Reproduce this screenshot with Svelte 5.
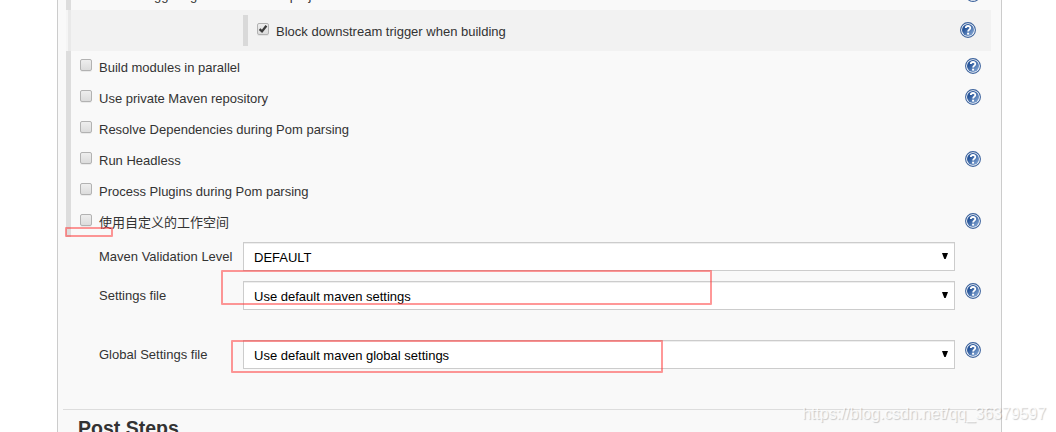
<script lang="ts">
	type Option = {
		label: string;
		checked?: boolean;
		help?: boolean;
		nested?: boolean;
	}

	type Field = {
		label: string;
		value: string;
		help?: boolean;
	}

	const options: Option[] = [
		{ label: 'Enable triggering of downstream projects', checked: true, help: true },
		{ label: 'Block downstream trigger when building', checked: true, help: true, nested: true },
		{ label: 'Build modules in parallel', help: true },
		{ label: 'Use private Maven repository', help: true },
		{ label: 'Resolve Dependencies during Pom parsing' },
		{ label: 'Run Headless', help: true },
		{ label: 'Process Plugins during Pom parsing' },
		{ label: '使用自定义的工作空间', help: true },
	];

	const fields: Field[] = [
		{ label: 'Maven Validation Level', value: 'DEFAULT' },
		{ label: 'Settings file', value: 'Use default maven settings', help: true },
		{ label: 'Global Settings file', value: 'Use default maven global settings', help: true },
	];
</script>

{#snippet helpIcon()}
	<svg class="help" viewBox="0 0 16 16">
		<defs>
			<linearGradient id="help-fill" x1="0" y1="0" x2="1" y2="1">
				<stop offset="0.3" stop-color="#28569a" />
				<stop offset="1" stop-color="#92b2dc" />
			</linearGradient>
		</defs>
		<circle cx="8" cy="8" r="7.4" fill="#fff" stroke="#3d639d" stroke-width="1.1" />
		<circle cx="8" cy="8" r="6" fill="url(#help-fill)" />
		<path d="M5.8 6.1C5.8 3.3 10.3 3.4 10.3 5.9C10.3 7.6 8.1 7.6 8.1 9.5" fill="none" stroke="#fff" stroke-width="1.8" />
		<rect x="7.1" y="10.7" width="2" height="1.9" fill="#fff" />
	</svg>
{/snippet}

<div class="page">
	<main>
		<section class="options">
			{#each options as option}
				<div class="option" class:nested={option.nested}>
					<label>
						<span class="box">
							{#if option.checked}
								<svg viewBox="0 0 10 10">
									<path d="M1.6 5.2L4 7.4L8.4 1.8" />
								</svg>
							{/if}
						</span>
						<span class="text">{option.label}</span>
					</label>
					{#if option.help}
						{@render helpIcon()}
					{/if}
				</div>
			{/each}
		</section>

		<section class="fields">
			{#each fields as field}
				<div class="field">
					<span class="name">{field.label}</span>
					<div class="select">
						<span>{field.value}</span>
						<svg viewBox="0 0 6 6"><path d="M0 0H6L3.7 6H2.3Z" /></svg>
					</div>
					{#if field.help}
						{@render helpIcon()}
					{/if}
				</div>
			{/each}
		</section>

		<h2>Post Steps</h2>
	</main>

	<div class="mark workspace"></div>
	<div class="mark settings"></div>
	<div class="mark global-settings"></div>
	<span class="watermark">https://blog.csdn.net/qq_36379597</span>
</div>

<style>
	.page {
		position: relative;

		height: 432px;

		overflow: hidden;

		background-color: #fff;
		color: #333;

		font: 13px/20px 'Liberation Sans', Arial, 'Noto Sans CJK SC', sans-serif;
	}

	main {
		box-sizing: border-box;
		width: 945px;
		height: 432px;
		margin-left: 57px;
		border: solid #ccc;
		border-width: 0 1px;
		padding: 0 5px;

		overflow: hidden;

		background-color: #f9f9f9;
	}

	.options {
		margin: -21px 5px 0 3px;
		border-left: 5px solid #ddd;
	}

	.option {
		box-sizing: border-box;
		height: 31px;
		padding: 7px 10px 0 9px;

		display: flex;
		align-items: flex-start;
		justify-content: space-between;

		label {
			display: flex;
			gap: 7px;
		}

		&.nested {
			height: 41px;
			margin-left: -5px;
			border-left: 2px solid #f5f5f5;
			padding: 5px 15px 5px 175px;

			background: linear-gradient(to right, #e9e9e9 3px, #f2f2f2 3px);
			background-clip: padding-box;

			label {
				height: 31px;
				border-left: 5px solid #d9d9d9;
				padding-left: 9px;
			}

			.box {
				margin-top: 8px;
			}

			.text {
				padding-top: 7px;
			}

			.help {
				margin-top: 7px;
			}
		}
	}

	.box {
		box-sizing: border-box;
		width: 12px;
		height: 12px;
		margin-top: 1px;
		border: 1px solid #b2b2b2;
		border-radius: 2px;

		line-height: 0;

		background: linear-gradient(#eee, #dcdcdc);
		box-shadow: 0 1px 0 rgba(0, 0, 0, 0.06);

		svg {
			width: 10px;
			height: 10px;
		}

		path {
			fill: none;
			stroke: #3c3c3c;
			stroke-width: 2.3;
		}
	}

	.help {
		flex: none;
		width: 16px;
		height: 16px;
	}

	.fields {
		height: 167px;
		padding: 5px 0 0 36px;
	}

	.field {
		height: 29px;
		margin-bottom: 10px;

		display: flex;
		align-items: flex-start;

		&:nth-child(2) {
			margin-bottom: 30px;
		}

		.name {
			width: 144px;
			padding-top: 5px;
		}

		.help {
			margin: 2px 0 0 10px;
		}
	}

	.select {
		box-sizing: border-box;
		width: 712px;
		height: 29px;
		border: 1px solid #ccc;
		padding: 3px 6px 0 10px;

		display: flex;
		align-items: center;
		justify-content: space-between;

		background-color: #fff;
		box-shadow: inset 0 1px 0 #eee;
		color: #000;

		svg {
			width: 6px;
			height: 6px;
			margin-bottom: 5px;
		}
	}

	h2 {
		margin: 0;
		border-top: 1px solid #ddd;
		padding: 6px 0 0 15px;

		font-size: 19.5px;
		line-height: 24px;
	}

	/* Hand-drawn highlights over the form */
	.mark {
		position: absolute;

		box-sizing: border-box;
		border: 2px solid rgba(255, 50, 50, 0.5);
		border-radius: 1px;
	}

	.workspace {
		left: 65px;
		top: 227px;
		width: 48px;
		height: 10px;
	}

	.settings {
		left: 221px;
		top: 270px;
		width: 491px;
		height: 35px;
	}

	.global-settings {
		left: 231px;
		top: 340px;
		width: 432px;
		height: 33px;
	}

	.watermark {
		position: absolute;
		right: 10px;
		bottom: 8px;

		color: rgba(255, 255, 255, 0.8);

		font-size: 15.9px;
		text-shadow: 1px 1px 1px rgba(0, 0, 0, 0.2);
	}
</style>
